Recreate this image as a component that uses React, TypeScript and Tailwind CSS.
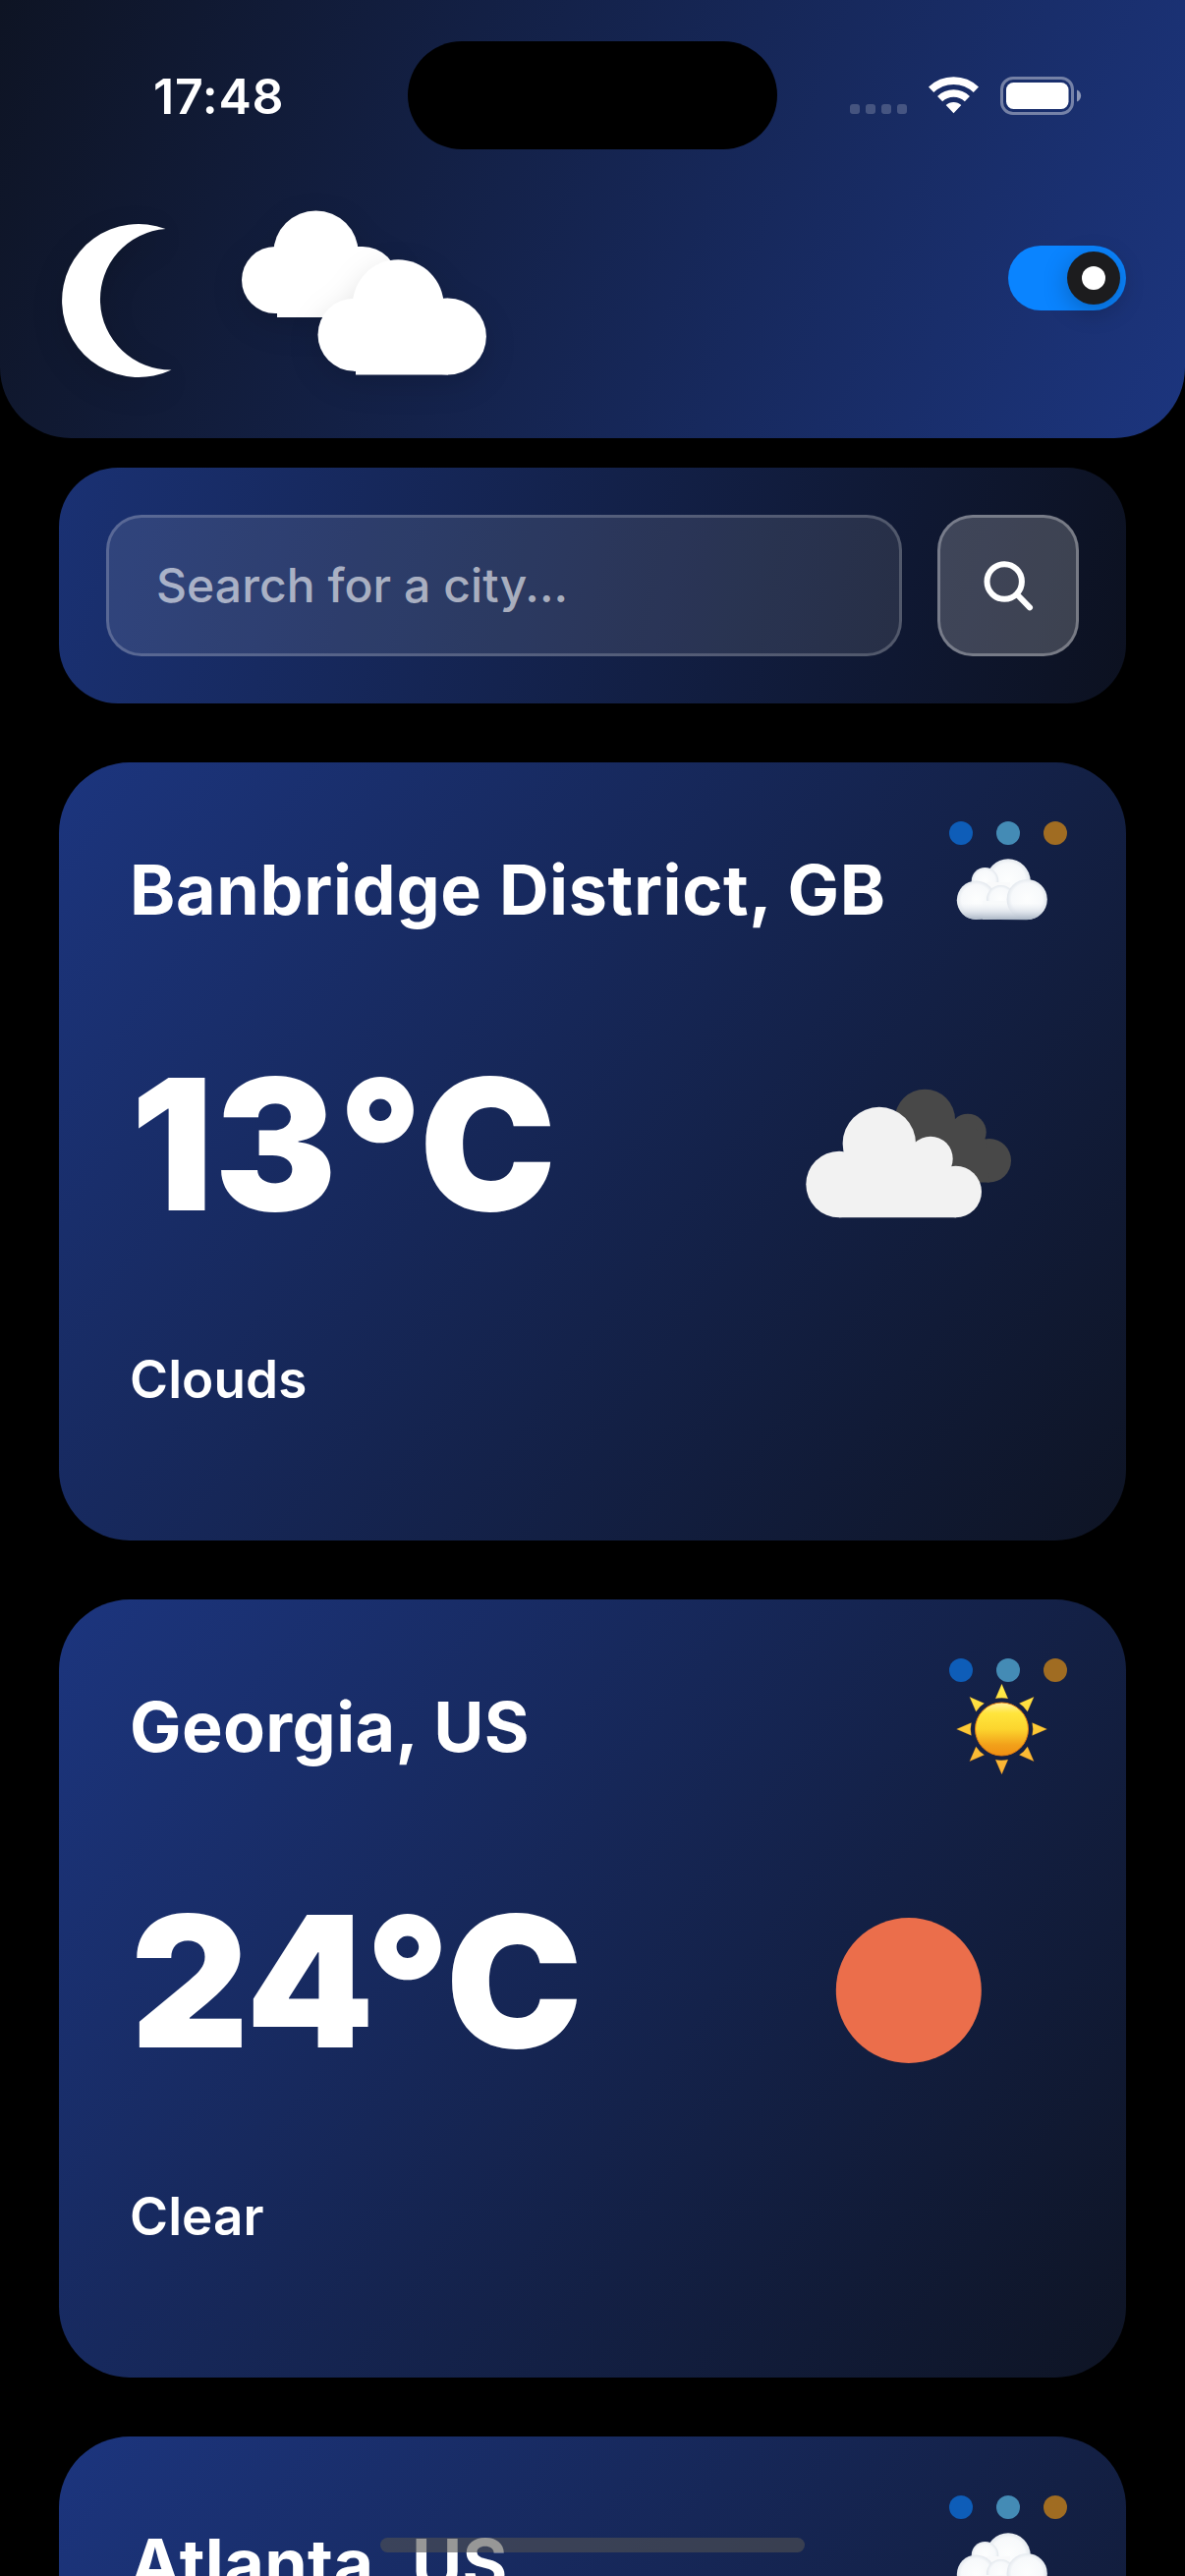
type Icon = "cloud" | "sun";

type City = { name: string; temp: string; sky: string; icon: Icon; nameTracking: string; tempTracking: string };

const cities: City[] = [
  { name: "Banbridge District, GB", temp: "13°C", sky: "Clouds", icon: "cloud", nameTracking: "tracking-[0.66px]", tempTracking: "tracking-[1.2px]" },
  { name: "Georgia, US", temp: "24°C", sky: "Clear", icon: "sun", nameTracking: "tracking-[0.4px]", tempTracking: "tracking-[0px]" },
  { name: "Atlanta, US", temp: "22°C", sky: "Clouds", icon: "cloud", nameTracking: "tracking-[0.35px]", tempTracking: "tracking-[0px]" },
];

function WifiIcon() {
  return (
    <svg className="ml-[22px] h-[38px] w-[51px]" viewBox="945 79 51 38" fill="none" stroke="#fff">
      <path d="M947.6 92.3a33 33 0 0 1 45.8 0" strokeWidth="7.7" />
      <path d="M956.6 101.6a20 20 0 0 1 27.8 0" strokeWidth="7.4" />
      <path d="M970.5 116.2l-7.8-8.2a11.3 11.3 0 0 1 15.6 0z" fill="#fff" stroke="none" />
    </svg>
  );
}

function BatteryIcon() {
  return (
    <svg className="ml-[22px] h-[39px] w-[83px]" viewBox="1018 78 83 39">
      <rect x="1019.5" y="79.5" width="72" height="36" rx="11.5" fill="none" stroke="#fff" strokeOpacity=".4" strokeWidth="3" />
      <rect x="1024" y="84" width="63.5" height="27" rx="7.5" fill="#fff" />
      <path d="M1096 91.5c5.500 2 5.500 10 0 12z" fill="#fff" fillOpacity=".5" />
    </svg>
  );
}

function StatusBar() {
  return (
    <div className="grid h-[186px] grid-cols-[415px_376px_1fr] pt-[42px]">
      <div className="flex h-[110px] items-center pl-[156px] pt-[2px] text-[50px] font-semibold leading-none tracking-[0.75px]">17:48</div>
      <div className="h-[110px] rounded-full bg-black" />
      <div className="flex h-[110px] items-center pl-[74px]">
        <div className="mt-[28px] flex gap-[6px]">
          {[0, 1, 2, 3].map((i) => (
            <span key={i} className="size-[10px] rounded-[3px] bg-white/20" />
          ))}
        </div>
        <WifiIcon />
        <BatteryIcon />
      </div>
    </div>
  );
}

function NightSky() {
  return (
    <svg className="h-[194px] w-[460px] overflow-visible" viewBox="60 186 460 194" fill="#fff">
      <path
        className="drop-shadow-[0_10px_15px_rgba(0,0,0,0.13)]"
        d="M168.500 233A78 78 0 1 0 174.500 376.500A71.850 71.850 0 0 1 168.500 233z"
      />
      <g className="drop-shadow-[0_10px_15px_rgba(0,0,0,0.13)]">
        <circle cx="321.5" cy="257.6" r="43.2" />
        <circle cx="280" cy="285" r="34" />
        <circle cx="369" cy="287" r="36" />
        <path d="M280 251h89v72h-87v-4h-2z" />
      </g>
      <g className="drop-shadow-[0_10px_15px_rgba(0,0,0,0.13)]">
        <circle cx="405.2" cy="310.7" r="46.4" />
        <circle cx="360.5" cy="340.7" r="37" />
        <circle cx="456" cy="342.5" r="38.9" />
        <path d="M360 303.700h96v77.700h-94v-3.700h-2z" />
      </g>
    </svg>
  );
}

function Toggle() {
  return (
    <div className="flex h-[66px] w-[120px] items-center justify-end rounded-full bg-[#0a84ff] pr-[6px]">
      <div className="flex size-[54px] items-center justify-center rounded-full bg-[#1c1c1e] shadow-[0_6px_24px_rgba(0,0,0,0.25)]">
        <div className="size-[24px] rounded-full bg-white" />
      </div>
    </div>
  );
}

function SearchBar() {
  return (
    <div className="mx-[60px] mt-[30px] flex h-[240px] items-center gap-[36px] rounded-[60px] bg-[linear-gradient(102.5deg,#1a3173,#0c1120)] px-[48px]">
      <div className="flex h-[144px] flex-1 items-center rounded-[36px] border-[3px] border-white/20 bg-white/10 pl-[48px] text-[48px] font-medium tracking-[0.08px] text-white/60">
        Search for a city...
      </div>
      <div className="flex size-[144px] items-center justify-center rounded-[36px] border-[3px] border-white/30 bg-white/20">
        <svg className="size-[60px]" viewBox="996 566 60 60" fill="none" stroke="#fff" strokeWidth="6" strokeLinecap="round">
          <circle cx="1022.2" cy="592" r="17.7" />
          <path d="M1035.500 605.500l12.500 12.800" />
        </svg>
      </div>
    </div>
  );
}

function CloudEmoji() {
  return (
    <svg className="h-[92px] w-[108px]" viewBox="966 859 108 92">
      <defs>
        <radialGradient id="puff" cx=".5" cy=".48" r=".56">
          <stop offset="0" stopColor="#fdfefe" />
          <stop offset=".68" stopColor="#f7f9fb" />
          <stop offset="1" stopColor="#d6dde5" />
        </radialGradient>
        <linearGradient id="base" x1="0" y1="0" x2="0" y2="1">
          <stop offset="0" stopColor="#eef1f5" stopOpacity="0" />
          <stop offset=".5" stopColor="#dbe1e9" stopOpacity=".8" />
          <stop offset="1" stopColor="#a9b5c4" />
        </linearGradient>
      </defs>
      <circle cx="1026" cy="896" r="22.7" fill="url(#puff)" />
      <circle cx="1002.5" cy="895.8" r="13.8" fill="url(#puff)" />
      <path d="M1004 897h24v13h-24z" fill="#f9fafb" />
      <circle cx="993.5" cy="915.3" r="19.7" fill="url(#puff)" />
      <path d="M1002 908h40v27h-40z" fill="#f8fafb" />
      <circle cx="1018.5" cy="914.5" r="14.5" fill="url(#puff)" />
      <path d="M1000 916h40v19h-40z" fill="#f8fafb" />
      <circle cx="1045.2" cy="914.5" r="20.6" fill="url(#puff)" />
      <path d="M974.500 918q45 2 90.500 0q-3 16-20 17.200l-53-.4q-14-1-17.500-16.800z" fill="url(#base)" />
    </svg>
  );
}

function SunEmoji() {
  return (
    <svg className="h-[92px] w-[108px] overflow-visible" viewBox="-53.5 -48 108 92">
      <defs>
        <linearGradient id="disk" x1="0" y1="0" x2="0" y2="1">
          <stop offset="0" stopColor="#fff0a0" />
          <stop offset=".2" stopColor="#ffe53c" />
          <stop offset=".5" stopColor="#fcd52e" />
          <stop offset=".8" stopColor="#f2a01a" />
          <stop offset="1" stopColor="#f09012" />
        </linearGradient>
        <linearGradient id="rays" gradientUnits="userSpaceOnUse" x1="0" y1="-46" x2="0" y2="46">
          <stop offset="0" stopColor="#fff04a" />
          <stop offset=".5" stopColor="#fcc936" />
          <stop offset="1" stopColor="#fbb034" />
        </linearGradient>
      </defs>
      <g fill="url(#rays)" stroke="#c8720f" strokeWidth=".4" strokeOpacity=".5">
        <path d="M0-46L6.400-31Q0-32.500 -6.400-31z" />
        <path d="M0 46L6.400 31Q0 32.500 -6.400 31z" />
        <path d="M-46 0L-31 6.400Q-32.500 0 -31-6.400z" />
        <path d="M46 0L31 6.400Q32.500 0 31-6.400z" />
        <path d="M-32.700-32.700L-17.800-26.200Q-23-23 -26.200-17.800z" />
        <path d="M32.700-32.700L17.800-26.200Q23-23 26.200-17.800z" />
        <path d="M-32.700 32.700L-17.800 26.200Q-23 23 -26.200 17.800z" />
        <path d="M32.700 32.700L17.800 26.200Q23 23 26.200 17.800z" />
      </g>
      <circle r="27" fill="url(#disk)" stroke="#e07a10" strokeWidth="1" />
    </svg>
  );
}

function SkyIcon({ icon }: { icon: Icon }) {
  if (icon === "sun") {
    return (
      <svg className="size-[300px]" viewBox="-150.8 -150 300 300">
        <circle r="74" fill="#eb6e4b" />
      </svg>
    );
  }
  return (
    <svg className="size-[300px]" viewBox="774 1024 300 300">
      <g fill="#484848">
        <circle cx="941.3" cy="1139.4" r="30.7" />
        <circle cx="985" cy="1152.4" r="18.7" />
        <circle cx="1006.8" cy="1181.2" r="22.2" />
        <path d="M941 1140h44l18 20 4 43.400h-66z" />
      </g>
      <g fill="#f2f2f2">
        <circle cx="894.8" cy="1164" r="37.2" />
        <circle cx="854.1" cy="1205.5" r="33.8" />
        <circle cx="947" cy="1179.4" r="22.7" />
        <circle cx="972.7" cy="1213" r="26.3" />
        <path d="M854 1239.300v-50l40-24h53l20 22 6 26v26z" />
      </g>
    </svg>
  );
}

function WeatherCard({ city }: { city: City }) {
  return (
    <div className="relative h-[792px] shrink-0 rounded-[72px] bg-[linear-gradient(126.1deg,#1c357e,#0e1424)] px-[72px] pt-[72px]">
      <div className="absolute right-[60px] top-[60px] flex gap-[24px]">
        <span className="size-[24px] rounded-full bg-[#0e5db8]" />
        <span className="size-[24px] rounded-full bg-[#448bb5]" />
        <span className="size-[24px] rounded-full bg-[#a06c22]" />
      </div>
      <div className="flex h-[115px] items-center justify-between">
        <h2 className={`whitespace-nowrap text-[70px] font-bold leading-none ${city.nameTracking}`}>{city.name}</h2>
        {city.icon === "sun" ? <SunEmoji /> : <CloudEmoji />}
      </div>
      <div className="mt-[61px] flex h-[300px] items-center justify-between">
        <span className={`ml-px pb-[18px] text-[186px] font-black leading-none ${city.tempTracking}`}>{city.temp}</span>
        <SkyIcon icon={city.icon} />
      </div>
      <p className="mt-[41px] text-[53px] font-semibold leading-[79px] tracking-[0.1px]">{city.sky}</p>
    </div>
  );
}

export default function App() {
  return (
    <div className="relative h-[2622px] w-[1206px] overflow-hidden bg-black font-[Inter,sans-serif] text-white">
      <header className="h-[446px] rounded-b-[72px] bg-[linear-gradient(110.3deg,#0e1424,#1c357e)]">
        <StatusBar />
        <div className="flex h-[194px] items-center justify-between px-[60px]">
          <NightSky />
          <Toggle />
        </div>
      </header>
      <SearchBar />
      <main className="flex flex-col gap-[60px] px-[60px] pt-[60px]">
        {cities.map((city) => (
          <WeatherCard key={city.name} city={city} />
        ))}
      </main>
      <div className="absolute bottom-[24px] left-[387px] h-[15px] w-[432px] rounded-full bg-[#525252]/60" />
    </div>
  );
}
